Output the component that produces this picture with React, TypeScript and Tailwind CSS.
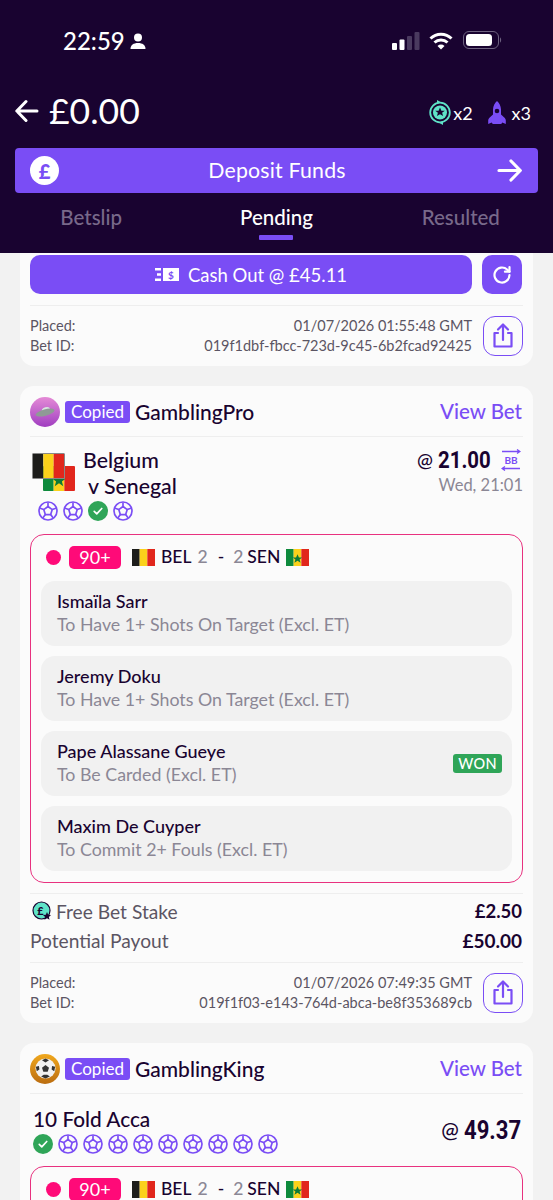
import React from "react";

const Ball = () => (
  <svg width="20" height="20" viewBox="0 0 24 24" fill="none" stroke="#7a4df5" strokeWidth="2" strokeLinejoin="round" className="shrink-0">
    <circle cx="12" cy="12" r="10.800" />
    <path d="M12 6.600l5.100 3.700-1.900 6H8.800l-1.900-6z" />
    <path d="M12 6.600V1.800M17.100 10.300l4.400-1.500M15.200 16.300l2.800 3.900M8.800 16.300L6 20.200M6.900 10.300L2.500 8.800" />
  </svg>
);

const Check = () => (
  <svg width="20" height="20" viewBox="0 0 24 24" className="shrink-0">
    <circle cx="12" cy="12" r="12" fill="#2fa558" />
    <path d="M7.500 12.500l3 3 6-6.500" fill="none" stroke="#fff" strokeWidth="2" strokeLinecap="round" strokeLinejoin="round" />
  </svg>
);

const Bel = ({ w = 20, h = 18 }: { w?: number; h?: number }) => (
  <svg width={w} height={h} viewBox="0 0 21 18" preserveAspectRatio="none" className="shrink-0 block">
    <rect width="7" height="18" fill="#1d1d1b" />
    <rect x="7" width="7" height="18" fill="#fbd11b" />
    <rect x="14" width="7" height="18" fill="#e1261c" />
  </svg>
);

const Sen = ({ w = 20, h = 18 }: { w?: number; h?: number }) => (
  <svg width={w} height={h} viewBox="0 0 21 18" preserveAspectRatio="none" className="shrink-0 block">
    <rect width="7" height="18" fill="#0e8a3c" />
    <rect x="7" width="7" height="18" fill="#fbd11b" />
    <rect x="14" width="7" height="18" fill="#e1261c" />
    <path d="M10.500 5.500l1.300 3.600h3l-2.400 2.100.9 3.300-2.800-2-2.800 2 .9-3.300-2.400-2.100h3z" fill="#0e7a36" />
  </svg>
);

const Share = () => (
  <div className="w-[40px] h-[40px] rounded-[12px] border border-[#7a4df5] flex items-center justify-center shrink-0">
    <svg width="26" height="28" viewBox="0 0 26 28" fill="none" stroke="#7a4df5" strokeWidth="2.200" strokeLinecap="round" strokeLinejoin="round">
      <path d="M13 18V3M8 7.500L13 2.500l5 5" />
      <path d="M8 11H4.500v13.500h17V11H18" />
    </svg>
  </div>
);

const Placed = ({ date, id }: { date: string; id: string }) => (
  <div className="flex items-center gap-[11px] h-[60px] border-t border-[#eeeeee]">
    <div className="flex-1 text-[14.500px] leading-[20px] text-[#5b5563]">
      <div className="flex justify-between"><span>Placed:</span><span>{date}</span></div>
      <div className="flex justify-between"><span>Bet ID:</span><span>{id}</span></div>
    </div>
    <Share />
  </div>
);

const CardHead = ({ name, avatar }: { name: string; avatar: React.ReactNode }) => (
  <div className="flex items-center h-[50px] border-b border-[#eeeeee]">
    {avatar}
    <span className="ml-[5px] h-[22px] w-[65px] rounded-[3px] bg-[#7a4df5] text-white text-[17px] leading-[22px] text-center">Copied</span>
    <span className="ml-[5px] text-[21px] font-medium text-[#190330]">{name}</span>
    <span className="ml-auto mr-[1px] text-[20.500px] font-medium text-[#7a4df5]">View Bet</span>
  </div>
);

const Ufo = () => (
  <div className="w-[30px] h-[30px] rounded-full bg-gradient-to-b from-[#e58ad6] to-[#a03cc0] flex items-center justify-center shrink-0">
    <svg width="22" height="13" viewBox="0 0 20 12">
      <ellipse cx="11" cy="5" rx="4" ry="3" fill="#d8e6e0" transform="rotate(-15 11 5)" />
      <ellipse cx="10" cy="7" rx="9" ry="3" fill="#8f9a96" transform="rotate(-15 10 7)" />
    </svg>
  </div>
);

const Soccer = () => (
  <div className="w-[30px] h-[30px] rounded-full bg-gradient-to-b from-[#f0a81e] to-[#bb6d10] flex items-center justify-center shrink-0">
    <svg width="21" height="21" viewBox="0 0 24 24">
      <circle cx="12" cy="12" r="11.500" fill="#f1f1f1" />
      <path d="M12 8l4 3-1.500 4.800h-5L8 11z" fill="#333" />
      <path d="M12 .5l4 2-4 2.500-4-2.500zM23 10l-1 5-3-2 .5-4zM1 10l1 5 3-2-.5-4zM7 21l3-2h4l3 2-5 2.500z" fill="#333" />
    </svg>
  </div>
);

const LiveRow = () => (
  <div className="flex items-center h-[46px] pb-[2px] pl-[15px] text-[17.500px] font-medium text-[#190330]">
    <span className="w-[15px] h-[15px] rounded-full bg-[#ff0a78] shrink-0" />
    <span className="ml-[8px] w-[52px] h-[23px] rounded-[5px] bg-[#ff0a78] text-white text-[18px] leading-[23px] text-center font-normal">90+</span>
    <span className="ml-[11px]"><Bel w={23} h={17} /></span>
    <span className="ml-[6px]">BEL</span>
    <span className="ml-[6px] text-[#8b8795]">2</span>
    <span className="ml-[10px]">-</span>
    <span className="ml-[9px] text-[#8b8795]">2</span>
    <span className="ml-[4px]">SEN</span>
    <span className="ml-[6px]"><Sen w={23} h={17} /></span>
  </div>
);

const Leg = ({ name, market, won }: { name: string; market: string; won?: boolean }) => (
  <div className="h-[65px] rounded-[14px] bg-[#f1f1f1] pl-[16px] pr-[10px] flex items-center justify-between">
    <div className="pb-[2px]">
      <div className="text-[18px] leading-[23px] font-medium text-[#190330]">{name}</div>
      <div className="text-[17.800px] leading-[23px] text-[#8b8795]">{market}</div>
    </div>
    {won && <span className="w-[49px] h-[19px] rounded-[3px] bg-[#2fa558] text-white text-[14.500px] leading-[19px] font-medium text-center tracking-wide">WON</span>}
  </div>
);

const App = () => (
  <div className="w-[553px] h-[1200px] overflow-hidden bg-[#f2f2f2]" style={{ fontFamily: "Lato, 'Liberation Sans', sans-serif" }}>
    <header className="h-[253px] bg-[#190330] text-white">
      <div className="h-[82px] flex items-start pl-[63px] pr-[51px] pt-[26px]">
        <span className="text-[24px] leading-[30px] font-medium">22:59</span>
        <svg width="16" height="17" viewBox="0 0 16 17" fill="#fff" className="ml-[5px] mt-[7px]">
          <circle cx="8" cy="4.500" r="4" />
          <path d="M0.500 16c0-4 3-6 7.500-6s7.500 2 7.500 6z" />
        </svg>
        <svg width="28" height="18" viewBox="0 0 28 18" className="ml-auto mt-[6px]">
          <rect x="0" y="11" width="5" height="7" rx="1" fill="#fff" />
          <rect x="7.500" y="7.500" width="5" height="10.500" rx="1" fill="#fff" />
          <rect x="15" y="4" width="5" height="14" rx="1" fill="#4a3a5f" />
          <rect x="22.500" y="0" width="5" height="18" rx="1" fill="#4a3a5f" />
        </svg>
        <svg width="24" height="18" viewBox="0 0 24 18" fill="none" stroke="#fff" strokeWidth="3" className="ml-[9px] mt-[6px]">
          <path d="M1.500 6.500a15 15 0 0 1 21 0M5.500 10.500a9.500 9.500 0 0 1 13 0" />
          <path d="M12 17.500l-3.500-3.500a5 5 0 0 1 7 0z" fill="#fff" stroke="none" />
        </svg>
        <svg width="39" height="19" viewBox="0 0 39 19" className="ml-[10px] mt-[5px]">
          <rect x="0.500" y="0.500" width="35" height="17" rx="5.500" fill="none" stroke="#6e6280" />
          <rect x="3" y="3" width="26" height="12" rx="3.500" fill="#fff" />
          <path d="M37 6.500c1.500.5 1.500 4.500 0 5z" fill="#6e6280" />
        </svg>
      </div>
      <div className="h-[66px] flex items-center pl-[15px] pr-[22px] pb-[8px]">
        <svg width="24" height="24" viewBox="0 0 24 24" fill="none" stroke="#fff" strokeWidth="3" strokeLinecap="round" strokeLinejoin="round">
          <path d="M22 12H2M11 2.500L1.800 12l9.200 9.500" />
        </svg>
        <span className="ml-[10px] text-[35.500px] leading-[40px]">£0.00</span>
        <svg width="22" height="27" viewBox="0 0 22 27" fill="none" className="ml-auto mt-[3px]">
          <circle cx="11" cy="13.500" r="9.800" stroke="#5fe3c8" strokeWidth="1.800" />
          <circle cx="11" cy="13.500" r="7" fill="#5fe3c8" />
          <path d="M11 8.500l1.400 3.200h3.400l-2.700 2.100 1 3.300-3.100-1.900-3.100 1.900 1-3.300-2.700-2.100h3.400z" fill="#190330" />
          <path d="M8 1l3.500 2L8 5zM14 22l-3.500 2 3.500 2z" fill="#5fe3c8" />
        </svg>
        <span className="ml-[2px] text-[18px] mt-[4px]">x2</span>
        <svg width="18" height="24" viewBox="0 0 18 24" className="ml-[15px] mt-[3px]">
          <path d="M9 0c2.500 2 3.800 5 4 8.500v5l3.800 3.500c.7.700 1 1.500 1 2.500V23l-3.500-1.500c-.4 1-1.300 1.500-2.300 1.500H6c-1 0-1.900-.5-2.300-1.500L.2 23v-3.500c0-1 .3-1.800 1-2.500L5 13.500v-5C5.200 5 6.500 2 9 0z" fill="#7a4df5" />
          <circle cx="9" cy="10" r="2.300" fill="#190330" />
        </svg>
        <span className="ml-[6px] text-[18px] mt-[4px]">x3</span>
      </div>
      <div className="mx-[15px] h-[45px] rounded-[4px] bg-[#7a4df5] flex items-center justify-between pl-[15px] pr-[16px]">
        <span className="w-[29px] h-[29px] rounded-full bg-white text-[#7a4df5] flex items-center justify-center text-[20px] font-black">£</span>
        <span className="text-[21.300px] tracking-[0.2px] pr-[2px]">Deposit Funds</span>
        <svg width="25" height="25" viewBox="0 0 25 25" fill="none" stroke="#fff" strokeWidth="3.200" strokeLinecap="round" strokeLinejoin="round">
          <path d="M2 12.500h21M14 3l9.300 9.500L14 22" />
        </svg>
      </div>
      <nav className="grid grid-cols-3 text-[20.500px] leading-[28px] font-medium text-center mt-[10px]">
        <span className="text-[#78698a] pr-[2px]">Betslip</span>
        <span className="flex flex-col items-center">
          <span>Pending</span>
          <span className="mt-[4px] w-[34px] h-[5px] rounded-[1px] bg-[#7a4df5]" />
        </span>
        <span className="text-[#78698a]">Resulted</span>
      </nav>
    </header>

    <main className="mx-[20px] flex flex-col gap-[20px]">
      <section className="h-[113px] rounded-b-[14px] bg-[#fbfbfb] px-[10px] pt-[2px]">
        <div className="flex gap-[10px] h-[50px]">
          <div className="w-[442px] h-[39px] rounded-[10px] bg-[#7a4df5] text-white flex items-center justify-center gap-[9px] text-[18.500px]">
            <svg width="24" height="13" viewBox="0 0 24 13">
              <rect x="8" y="0" width="16" height="13" fill="#fff" />
              <path d="M0 1.200h6M2 6.500h4M0 11.800h6" stroke="#fff" strokeWidth="2.500" />
              <text x="16" y="10.500" textAnchor="middle" fontSize="10" fontWeight="700" fill="#7a4df5">$</text>
            </svg>
            <span className="mt-[2px]">Cash Out @ £45.11</span>
          </div>
          <div className="w-[40px] h-[39px] rounded-[10px] bg-[#7a4df5] flex items-center justify-center">
            <svg width="20" height="20" viewBox="0 0 24 24" fill="none" stroke="#fff" strokeWidth="2.600" strokeLinecap="round" strokeLinejoin="round">
              <path d="M21 12a9 9 0 1 1-2.800-6.500L21 8" />
              <path d="M21 2.500V8h-5.500" />
            </svg>
          </div>
        </div>
        <Placed date="01/07/2026 01:55:48 GMT" id="019f1dbf-fbcc-723d-9c45-6b2fcad92425" />
      </section>

      <section className="h-[637px] rounded-[14px] bg-[#fbfbfb] px-[10px] pt-[1px]">
        <CardHead name="GamblingPro" avatar={<Ufo />} />
        <div className="flex justify-between h-[97px] pt-[10px]">
          <div>
            <div className="flex">
              <div className="relative w-[43px] h-[38px] ml-[2px] mt-[6px]">
                <div className="absolute left-[11px] top-[13px] rounded-[1px] overflow-hidden"><Sen w={32} h={25} /></div>
                <div className="absolute left-0 top-0 rounded-[1px] overflow-hidden border border-[#888]"><Bel w={31} h={24} /></div>
              </div>
              <div className="ml-[8px] text-[21.300px] leading-[26px] font-medium text-[#190330]">
                <div>Belgium</div>
                <div className="pl-[5px]">v Senegal</div>
              </div>
            </div>
            <div className="flex gap-[5px] ml-[8px] mt-[2px]"><Ball /><Ball /><Check /><Ball /></div>
          </div>
          <div className="text-right">
            <div className="flex items-center justify-end h-[26px] text-[#190330]">
              <span className="text-[19px] font-medium">@</span>
              <span className="ml-[5px] mr-[-9px] inline-block origin-left scale-x-[0.85] text-[24px] font-bold" style={{ fontFamily: "Roboto, sans-serif" }}>21.00</span>
              <svg width="20" height="22" viewBox="0 0 20 22" className="ml-[10px] mr-[2px]">
                <path d="M1 2.500h18M16 .5l3 2-3 2M1 19.500h18M4 17.500l-3 2 3 2" stroke="#7a4df5" strokeWidth="1.300" fill="none" />
                <text x="10" y="15" textAnchor="middle" fontSize="10" fontWeight="700" fill="#7a4df5">BB</text>
              </svg>
            </div>
            <div className="text-[16.500px] leading-[24px] text-[#8b8795]">Wed, 21:01</div>
          </div>
        </div>
        <div className="h-[349px] rounded-[14px] border border-[#e8317f] flex flex-col">
          <LiveRow />
          <div className="flex flex-col gap-[10px] px-[10px]">
            <Leg name="Ismaïla Sarr" market="To Have 1+ Shots On Target (Excl. ET)" />
            <Leg name="Jeremy Doku" market="To Have 1+ Shots On Target (Excl. ET)" />
            <Leg name="Pape Alassane Gueye" market="To Be Carded (Excl. ET)" won />
            <Leg name="Maxim De Cuyper" market="To Commit 2+ Fouls (Excl. ET)" />
          </div>
        </div>
        <div className="mt-[10px] border-t border-[#eeeeee] h-[69px] pb-[5px] flex flex-col justify-center text-[19.200px] leading-[29px] text-[#5b5563]">
          <div className="flex items-center">
            <svg width="20" height="20" viewBox="0 0 20 20" className="ml-[2px] mr-[4px]">
              <circle cx="9.500" cy="9.500" r="8.500" fill="#5fe3c8" stroke="#190330" strokeWidth="1.200" />
              <text x="8.500" y="13.500" textAnchor="middle" fontSize="11" fontWeight="900" fill="#190330">£</text>
              <path d="M15 11l1.200 2.700 2.800.3-2.100 1.900.6 2.800-2.500-1.400-2.500 1.400.6-2.800-2.100-1.900 2.800-.3z" fill="#190330" />
            </svg>
            <span>Free Bet Stake</span>
            <span className="ml-auto mr-[1px] text-[18.500px] font-bold text-[#190330]">£2.50</span>
          </div>
          <div className="flex items-center justify-between">
            <span>Potential Payout</span>
            <span className="mr-[1px] text-[19px] font-bold text-[#190330]">£50.00</span>
          </div>
        </div>
        <Placed date="01/07/2026 07:49:35 GMT" id="019f1f03-e143-764d-abca-be8f353689cb" />
      </section>

      <section className="rounded-[14px] bg-[#fbfbfb] px-[10px] pt-[1px] h-[300px]">
        <CardHead name="GamblingKing" avatar={<Soccer />} />
        <div className="flex justify-between items-center h-[72px]">
          <div className="ml-[3px]">
            <div className="text-[20.800px] leading-[26px] font-medium text-[#190330] mt-[-1px]">10 Fold Acca</div>
            <div className="flex gap-[5px] mt-[2px]">
              <Check />
              {[0, 1, 2, 3, 4, 5, 6, 7, 8].map((i) => <Ball key={i} />)}
            </div>
          </div>
          <div className="flex items-center text-[#190330] mr-[2px]">
            <span className="text-[21px] font-medium">@</span>
            <span className="ml-[5px] mr-[-10px] inline-block origin-left scale-x-[0.85] text-[26px] font-bold" style={{ fontFamily: "Roboto, sans-serif" }}>49.37</span>
          </div>
        </div>
        <div className="h-[200px] rounded-[14px] border border-[#e8317f]">
          <LiveRow />
        </div>
      </section>
    </main>
  </div>
);

export default App;
